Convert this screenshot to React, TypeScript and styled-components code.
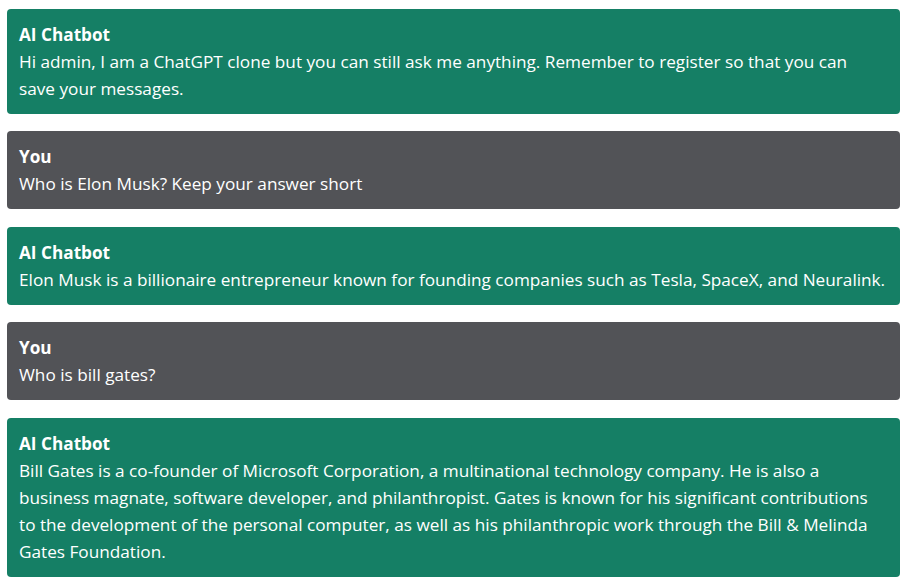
import React from "react";
import styled, { createGlobalStyle } from "styled-components";

const GlobalStyle = createGlobalStyle`
  body {
    margin: 0;
    background: #ffffff;
    font-family: "Open Sans", "Noto Sans", sans-serif;
  }
`;

type Message = {
  author: "bot" | "user";
  text: string;
};

const messages: Message[] = [
  {
    author: "bot",
    text: "Hi admin, I am a ChatGPT clone but you can still ask me anything. Remember to register so that you can save your messages.",
  },
  { author: "user", text: "Who is Elon Musk? Keep your answer short" },
  {
    author: "bot",
    text: "Elon Musk is a billionaire entrepreneur known for founding companies such as Tesla, SpaceX, and Neuralink.",
  },
  { author: "user", text: "Who is bill gates?" },
  {
    author: "bot",
    text: "Bill Gates is a co-founder of Microsoft Corporation, a multinational technology company. He is also a business magnate, software developer, and philanthropist. Gates is known for his significant contributions to the development of the personal computer, as well as his philanthropic work through the Bill & Melinda Gates Foundation.",
  },
];

const Chat = styled.div`
  display: flex;
  flex-direction: column;
  gap: 17.4px;
  padding: 9px 9px 0 7px;
`;

const Bubble = styled.div<{ $bot: boolean }>`
  background: ${(p) => (p.$bot ? "#157f65" : "#525357")};
  color: #ffffff;
  border-radius: 4px;
  padding: 12px 14px 12px 12px;
  font-size: 17.2px;
  line-height: 27px;
`;

const Author = styled.div`
  font-weight: 700;
`;

const Body = styled.div``;

export default function App() {
  return (
    <>
      <GlobalStyle />
      <Chat>
        {messages.map((m, i) => (
          <Bubble key={i} $bot={m.author === "bot"}>
            <Author>{m.author === "bot" ? "AI Chatbot" : "You"}</Author>
            <Body>{m.text}</Body>
          </Bubble>
        ))}
      </Chat>
    </>
  );
}
